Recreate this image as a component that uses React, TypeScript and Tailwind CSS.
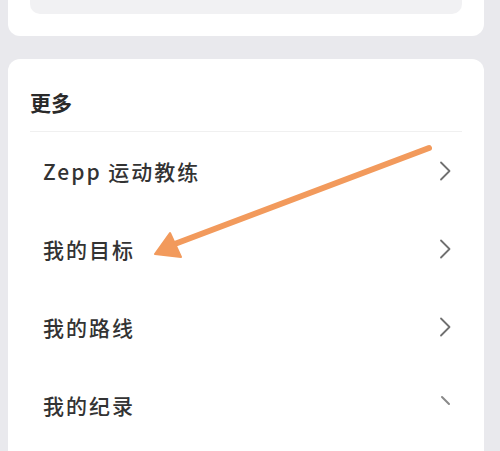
import React from "react";

const rows = ["Zepp 运动教练", "我的目标", "我的路线", "我的纪录"];

function Chevron({ partial }: { partial?: boolean }) {
  return (
    <svg width="14" height="22" viewBox="0 0 14 22" fill="none" className="shrink-0">
      {partial ? (
        <path d="M4 3 L11 10" stroke="#6b6b6b" strokeWidth="2" strokeLinecap="round" opacity="0.8" />
      ) : (
        <path d="M3 2.5 L11.5 11 L3 19.5" stroke="#707070" strokeWidth="1.8" strokeLinecap="round" strokeLinejoin="round" />
      )}
    </svg>
  );
}

export default function App() {
  return (
    <div
      className="relative w-[500px] h-[451px] overflow-hidden bg-[#e9e9ed] px-[8px] pr-[16px]"
      style={{ fontFamily: '"Noto Sans CJK SC", "Noto Sans", sans-serif' }}
    >
      {/* upper card, mostly scrolled away */}
      <div className="-mt-[20px] h-[56px] rounded-[12px] bg-white px-[22px]">
        <div className="h-[34px] rounded-b-[10px] bg-[#f1f1f3]" />
      </div>

      {/* "more" card */}
      <div className="mt-[23px] h-[420px] rounded-t-[12px] bg-white px-[22px]">
        <div className="pt-[28px] pb-[14px] text-[21px] font-bold leading-[30px] text-[#2a2a2a]">更多</div>
        <div className="h-px bg-[#f0f0f0]" />
        <div className="flex flex-col">
          {rows.map((r, i) => (
            <div key={r} className="flex h-[78px] items-center justify-between pl-[13px] pr-[10px]">
              <span className="text-[21px] font-medium tracking-[2px] leading-[30px] text-[#333]">{r}</span>
              <Chevron partial={i === 3} />
            </div>
          ))}
        </div>
      </div>

      {/* annotation arrow */}
      <svg className="absolute left-0 top-0" width="500" height="451" viewBox="0 0 500 451">
        <line x1="429" y1="148" x2="172" y2="245" stroke="#f29a5c" strokeWidth="6" strokeLinecap="round" />
        <path d="M155 254 L170 233 L181 257 Z" fill="#f29a5c" stroke="#f29a5c" strokeWidth="2" strokeLinejoin="round" />
      </svg>
    </div>
  );
}
